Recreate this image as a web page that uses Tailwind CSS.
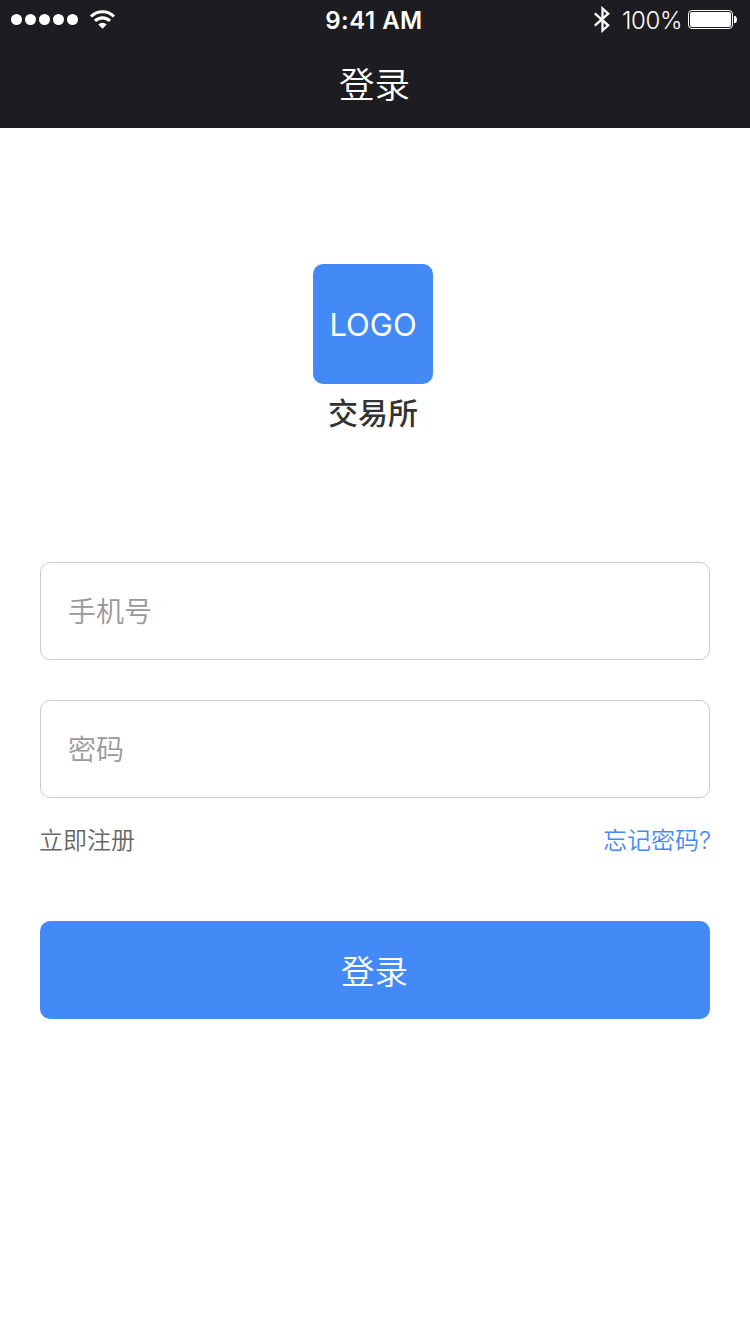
<!DOCTYPE html>
<html lang="zh-CN">
<head>
  <meta charset="UTF-8">
  <meta name="viewport" content="width=750">
  <title>登录</title>
  <script src="https://cdn.jsdelivr.net/npm/@tailwindcss/browser@4"></script>
</head>
<body class="min-h-screen bg-white font-['Inter','Noto_Sans_CJK_SC',sans-serif] font-[350]">

  <!-- 顶部 -->
  <header class="h-32 bg-[#1d1c21] text-white">
    <!-- 状态栏 -->
    <div class="grid h-[39px] grid-cols-3 items-center">
      <div class="flex items-center pl-[11px]">
        <div class="flex gap-[3px]">
          <span class="size-[11px] rounded-full bg-white"></span>
          <span class="size-[11px] rounded-full bg-white"></span>
          <span class="size-[11px] rounded-full bg-white"></span>
          <span class="size-[11px] rounded-full bg-white"></span>
          <span class="size-[11px] rounded-full bg-white"></span>
        </div>
        <svg class="ml-3 h-[18px] w-[25px] overflow-visible" viewBox="0 0 25 18" fill="none" stroke="#fff" stroke-width="3.1">
          <path d="M1 5.5a16.4 16.4 0 0 1 23 0"/>
          <path d="M5 9.9a10.7 10.7 0 0 1 15 0"/>
          <path d="M12.5 17.8l-4.200-4.300a5.900 5.900 0 0 1 8.400 0z" fill="#fff" stroke="none"/>
        </svg>
      </div>
      <div class="pt-0.5 pr-0.5 text-center text-2xl font-semibold tracking-[0.5px]">9:41 AM</div>
      <div class="flex items-center justify-end pr-[13px]">
        <svg class="mr-3 h-[27px] w-4" viewBox="0 0 16 27" fill="none" stroke="#fff" stroke-width="2.3">
          <path d="M.8 7.3l13.400 12L8.500 24.500V2.500l5.700 5.200-13.400 12"/>
        </svg>
        <span class="mr-1.5 pt-0.5 text-2xl font-[350] tracking-[-0.4px]">100%</span>
        <svg class="h-[19px] w-[49px]" viewBox="0 0 49 19">
          <rect x=".5" y=".5" width="44" height="18" rx="3.5" fill="none" stroke="#fff"/>
          <rect x="2" y="2" width="41" height="15" rx="2" fill="#fff"/>
          <path d="M46 6h1.5q1.500 1 1.500 3.500t-1.500 3.500H46z" fill="#fff"/>
        </svg>
      </div>
    </div>
    <h1 class="pt-5 pr-px text-center text-[35.5px] leading-[54px] font-[350]">登录</h1>
  </header>

  <main class="px-10">
    <!-- LOGO -->
    <div class="flex flex-col items-center pt-[136px] pr-1">
      <div class="flex size-[120px] items-center justify-center rounded-[10px] bg-[#448af7] pt-0.5 text-[31px] font-normal text-white">LOGO</div>
      <div class="mt-[7px] text-[30px] leading-[45px] font-medium text-[#333]">交易所</div>
    </div>

    <!-- 登录表单 -->
    <form class="pt-[126px]">
      <input type="text" placeholder="手机号" class="block h-[98px] w-full rounded-[10px] border border-[#ccc] px-[27px] pt-0.5 text-[28px] outline-none placeholder:text-[#999]">
      <input type="password" placeholder="密码" class="mt-10 block h-[98px] w-full rounded-[10px] border border-[#ccc] px-[27px] pt-0.5 text-[28px] outline-none placeholder:text-[#999]">
      <div class="mt-[25px] flex justify-between text-2xl leading-9">
        <a href="#" class="-ml-px text-[#666]">立即注册</a>
        <a href="#" class="-mr-px text-[#448af7]">忘记密码?</a>
      </div>
      <button type="button" class="mt-[62px] block h-[98px] w-full rounded-[10px] bg-[#448af7] pt-1 pr-px text-[33.5px] text-white">登录</button>
    </form>
  </main>

</body>
</html>
